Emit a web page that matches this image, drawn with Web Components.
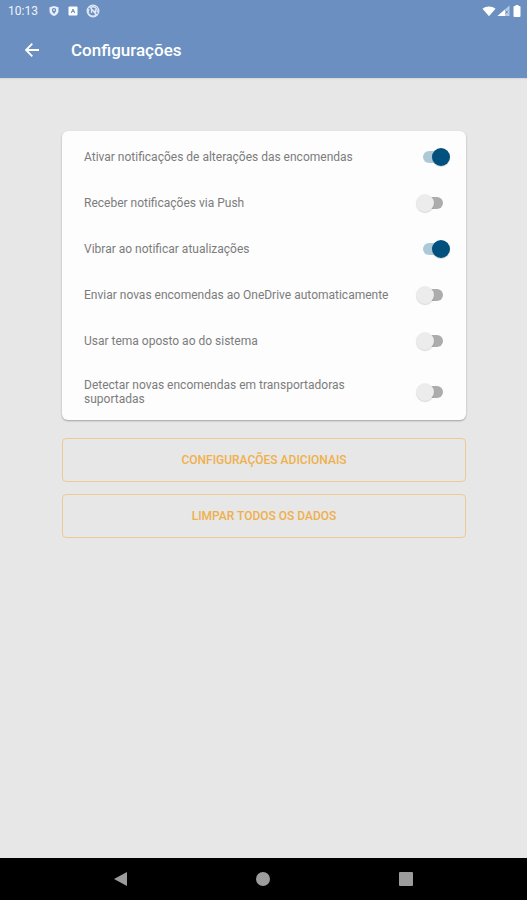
<!DOCTYPE html>
<html lang="pt-BR">
<head>
<meta charset="utf-8">
<meta name="viewport" content="width=device-width, initial-scale=1">
<title>Configurações</title>
<style>
    body {
        margin: 0;
        background: #e7e7e7;
        font-family: Roboto, "Liberation Sans", sans-serif;
    }
</style>
</head>
<body>
<settings-screen>
    <status-bar slot="top" time="10:13"></status-bar>
    <app-bar slot="top">Configurações</app-bar>

    <settings-card>
        <settings-switch checked>Ativar notificações de alterações das encomendas</settings-switch>
        <settings-switch>Receber notificações via Push</settings-switch>
        <settings-switch checked>Vibrar ao notificar atualizações</settings-switch>
        <settings-switch>Enviar novas encomendas ao OneDrive automaticamente</settings-switch>
        <settings-switch>Usar tema oposto ao do sistema</settings-switch>
        <settings-switch>Detectar novas encomendas em transportadoras suportadas</settings-switch>
    </settings-card>
    <outline-button>Configurações adicionais</outline-button>
    <outline-button>Limpar todos os dados</outline-button>

    <nav-bar slot="bottom"></nav-bar>
</settings-screen>

<script>
/**
 * Base: monta o shadow root a partir do template do componente
 */
class BaseElement extends HTMLElement {
    constructor() {
        super();
        const template = document.createElement('template');
        template.innerHTML = this.template;
        this.attachShadow({ mode: 'open' }).append(template.content.cloneNode(true));
    }
}

class SettingsScreen extends BaseElement {
    get template() {
        return `
            <style>
                :host {
                    display: flex;
                    flex-direction: column;
                    min-height: 100vh;
                }

                header {
                    background: #6a8fc0;
                    box-shadow: 0 1px 1px rgba(0, 0, 0, 0.06);
                }

                main {
                    flex: 1;
                    display: flex;
                    flex-direction: column;
                    gap: 12px;
                    padding: 53px 61px 24px 62px;
                }
            </style>
            <header><slot name="top"></slot></header>
            <main><slot></slot></main>
            <slot name="bottom"></slot>
        `;
    }
}

class StatusBar extends BaseElement {
    static observedAttributes = ['time'];

    get template() {
        return `
            <style>
                :host {
                    display: flex;
                    align-items: center;
                    height: 22px;
                    padding: 0 4px 0 8px;
                    color: #eef3fa;
                    font-size: 12px;
                }

                .notifications {
                    display: flex;
                    align-items: center;
                    gap: 8px;
                    flex: 1;
                    margin-left: 10px;
                }

                .system {
                    display: flex;
                    align-items: center;
                    gap: 1px;
                }

                svg {
                    display: block;
                }
            </style>
            <span class="time"></span>
            <div class="notifications">
                <svg width="12" height="12" viewBox="0 0 12 12" aria-hidden="true">
                    <path fill="#e9f0f9" d="M6 1 10.500 2.300V6c0 2.300-2 4.300-4.500 5C3.500 10.300 1.500 8.300 1.500 6V2.300z"/>
                    <path fill="#6a8fc0" d="M6 3a2.200 2.200 0 0 1 2.200 2.200C8.200 6.700 6 8.800 6 8.800S3.800 6.700 3.800 5.200A2.200 2.200 0 0 1 6 3z"/>
                    <circle cx="6" cy="5.100" r=".9" fill="#e9f0f9"/>
                </svg>
                <svg width="10" height="10" viewBox="0 0 10 10" aria-hidden="true">
                    <rect x=".5" y=".5" width="9" height="9" rx="1" fill="#fff"/>
                    <path d="M3.200 7 5 3 6.800 7M4 5.600h2" fill="none" stroke="#6a8fc0"/>
                </svg>
                <svg width="14" height="14" viewBox="0 0 14 14" fill="none" stroke="#dfe9f5" stroke-width="1.300" aria-hidden="true">
                    <circle cx="7" cy="7" r="5.800"/>
                    <path d="M10.500 10.200A4.400 4.400 0 0 1 3.200 5M4.600 3.400A4.400 4.400 0 0 1 11 8.500M5.500 9V5l3.800 4V5.200M3.500 2.500l7.500 9"/>
                </svg>
            </div>
            <div class="system">
                <svg width="14" height="12" viewBox="0 0 14 12" aria-hidden="true">
                    <path fill="#fff" d="M.5 3.800C4.200.7 9.800.7 13.500 3.800L7 11.300z"/>
                </svg>
                <svg width="13" height="12" viewBox="0 0 13 12" aria-hidden="true">
                    <path fill="#b9cce5" d="M12.500 .500V11H.500z"/>
                    <path fill="#fff" d="M8 4.500V11H.500z"/>
                    <path d="M8.500 5.500 11 8.500M11 5.500 8.500 8.500" stroke="#6a8fc0"/>
                </svg>
                <svg width="12" height="14" viewBox="0 0 12 14" aria-hidden="true">
                    <path fill="#fff" d="M4.500 1h3v1h1q1 0 1 1v9q0 1-1 1h-5q-1 0-1-1V3q0-1 1-1h1z"/>
                </svg>
            </div>
        `;
    }

    attributeChangedCallback(name, oldValue, newValue) {
        this.shadowRoot.querySelector('.time').textContent = newValue;
    }
}

class AppBar extends BaseElement {
    get template() {
        return `
            <style>
                :host {
                    display: flex;
                    align-items: center;
                    gap: 23px;
                    height: 56px;
                    padding: 0 16px;
                    color: #fff;
                }

                button {
                    display: grid;
                    place-items: center;
                    width: 32px;
                    height: 32px;
                    padding: 0;
                    border: 0;
                    background: none;
                    color: inherit;
                }

                h1 {
                    margin: 0;
                    font-size: 17px;
                    line-height: 24px;
                    font-weight: 500;
                }
            </style>
            <button type="button" aria-label="Voltar">
                <svg width="16" height="16" viewBox="0 0 16 16" fill="none" stroke="currentColor" stroke-width="1.800" aria-hidden="true">
                    <path d="M15 8H2.200M8.300 1.700 2 8l6.300 6.300"/>
                </svg>
            </button>
            <h1><slot></slot></h1>
        `;
    }
}

class SettingsCard extends BaseElement {
    get template() {
        return `
            <style>
                :host {
                    display: block;
                    margin-bottom: 6px;
                    padding: 3px 16px 0 22px;
                    background: #fdfdfd;
                    border-radius: 6px;
                    box-shadow: 0 1px 2px rgba(0, 0, 0, 0.3);
                }
            </style>
            <slot></slot>
        `;
    }
}

class SettingsSwitch extends BaseElement {
    get template() {
        return `
            <style>
                :host {
                    display: block;
                }

                label {
                    display: flex;
                    align-items: center;
                    gap: 16px;
                    box-sizing: border-box;
                    min-height: 46px;
                    padding: 14px 0;
                    color: #7c7c7c;
                    font-size: 12px;
                    line-height: 14px;
                }

                span {
                    flex: 1;
                }

                input {
                    appearance: none;
                    position: relative;
                    display: flex;
                    align-items: center;
                    flex: none;
                    width: 34px;
                    height: 18px;
                    margin: 0;
                }

                /* trilho */
                input::before {
                    content: "";
                    width: 20px;
                    height: 12px;
                    margin: 0 7px;
                    border-radius: 6px;
                    background: #acacac;
                }

                /* botão deslizante */
                input::after {
                    content: "";
                    position: absolute;
                    left: 0;
                    top: 0;
                    width: 18px;
                    height: 18px;
                    border-radius: 50%;
                    background: #ececec;
                    box-shadow: 0 1px 1px rgba(0, 0, 0, 0.15);
                }

                input:checked::before {
                    background: #adc8d7;
                }

                input:checked::after {
                    left: auto;
                    right: 0;
                    background: #02507d;
                }
            </style>
            <label>
                <span><slot></slot></span>
                <input type="checkbox" role="switch">
            </label>
        `;
    }

    connectedCallback() {
        this.shadowRoot.querySelector('input').checked = this.hasAttribute('checked');
    }
}

class OutlineButton extends BaseElement {
    get template() {
        return `
            <style>
                :host {
                    display: block;
                }

                button {
                    display: block;
                    width: 100%;
                    height: 44px;
                    padding: 0 16px;
                    border: 1px solid #f0c894;
                    border-radius: 4px;
                    background: none;
                    color: #efb04c;
                    font: 500 12px/16px Roboto, "Liberation Sans", sans-serif;
                    text-transform: uppercase;
                }
            </style>
            <button type="button"><slot></slot></button>
        `;
    }
}

class NavBar extends BaseElement {
    get template() {
        return `
            <style>
                :host {
                    display: flex;
                    height: 42px;
                    padding: 0 50px;
                    background: #000;
                    color: #9c9c9c;
                }

                button {
                    flex: 1;
                    display: grid;
                    place-items: center;
                    padding: 0;
                    border: 0;
                    background: none;
                    color: inherit;
                }
            </style>
            <button type="button" aria-label="Voltar">
                <svg width="14" height="14" viewBox="0 0 14 14" fill="currentColor" aria-hidden="true"><path d="M13 0v14L0 7z"/></svg>
            </button>
            <button type="button" aria-label="Início">
                <svg width="14" height="14" viewBox="0 0 14 14" fill="currentColor" aria-hidden="true"><circle cx="7" cy="7" r="7"/></svg>
            </button>
            <button type="button" aria-label="Recentes">
                <svg width="14" height="14" viewBox="0 0 14 14" fill="currentColor" aria-hidden="true"><rect width="14" height="14" rx="1"/></svg>
            </button>
        `;
    }
}

customElements.define('settings-screen', SettingsScreen);
customElements.define('status-bar', StatusBar);
customElements.define('app-bar', AppBar);
customElements.define('settings-card', SettingsCard);
customElements.define('settings-switch', SettingsSwitch);
customElements.define('outline-button', OutlineButton);
customElements.define('nav-bar', NavBar);
</script>
</body>
</html>
